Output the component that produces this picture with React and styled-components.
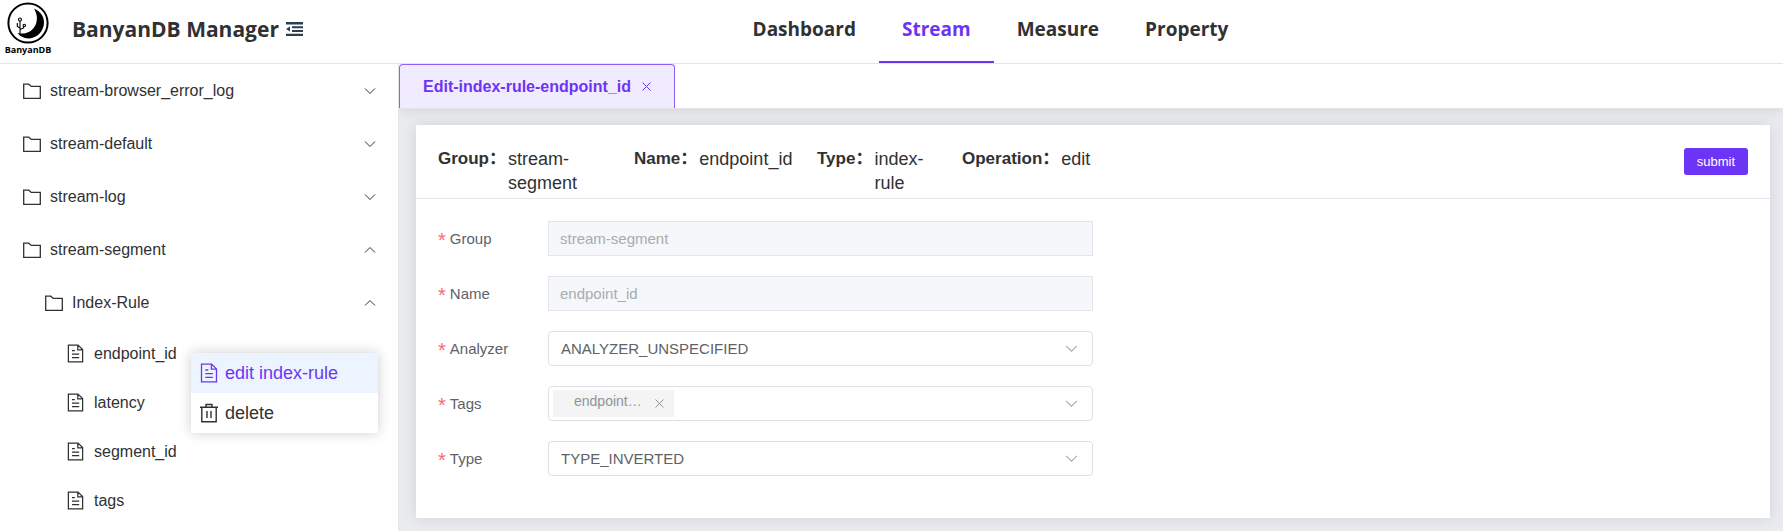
import React from "react";
import styled, { createGlobalStyle, css } from "styled-components";

const colors = {
  primary: "#6c35f5",
  primaryLight: "#f1ebff",
  text: "#303133",
  regular: "#606266",
  muted: "#a8abb2",
  border: "#dcdfe6",
  line: "#e4e5ea",
  page: "#e9ebef",
};

const GlobalStyle = createGlobalStyle`
  *, *::before, *::after { box-sizing: border-box; }
  body {
    margin: 0;
    color: ${colors.text};
    background: #fff;
    font-family: "Liberation Sans", "Noto Sans CJK SC", sans-serif;
    font-size: 16px;
  }
  button, input, select { font-family: inherit; margin: 0; }
  ul, dl, dd, h1 { margin: 0; padding: 0; list-style: none; }
`;

const Page = styled.div`
  display: flex;
  flex-direction: column;
  min-height: 100vh;
`;

const Header = styled.header`
  display: flex;
  align-items: stretch;
  height: 64px;
  padding-right: 106px;
  border-bottom: 1px solid ${colors.line};
  font-family: "Open Sans", sans-serif;
`;

const Brand = styled.div`
  display: flex;
  align-items: center;
  padding-left: 5px;
  padding-bottom: 6px;
`;

const Logo = styled.div`
  display: flex;
  flex-direction: column;
  align-items: center;
  width: 46px;
  margin-right: 21px;
  color: #000;
  font-size: 9px;
  line-height: 12px;
  font-weight: 700;
  white-space: nowrap;
`;

const Title = styled.h1`
  font-size: 21px;
  line-height: 28px;
  font-weight: 700;
  margin-right: 7px;
  white-space: nowrap;
`;

const IconButton = styled.button`
  display: inline-flex;
  align-items: center;
  justify-content: center;
  flex: none;
  padding: 0;
  border: 0;
  background: none;
  color: inherit;
  cursor: pointer;
`;

const Nav = styled.nav`
  flex: 1;
  display: flex;
  justify-content: center;
`;

const NavLink = styled.a`
  display: flex;
  align-items: center;
  padding: 0 23px 4px;
  border-bottom: 2px solid ${(p) => (p.$active ? colors.primary : "transparent")};
  color: ${(p) => (p.$active ? colors.primary : colors.text)};
  font-size: 19px;
  font-weight: 700;
  text-decoration: none;
`;

const Body = styled.div`
  flex: 1;
  display: flex;
`;

const Sidebar = styled.aside`
  position: relative;
  flex: none;
  width: 399px;
  border-right: 1px solid ${colors.line};
`;

const TreeRow = styled.button`
  display: flex;
  align-items: center;
  width: 100%;
  height: ${(p) => (p.$leaf ? 49 : 53)}px;
  padding: 0 22px 0 ${(p) => p.$indent}px;
  border: 0;
  background: none;
  color: ${colors.text};
  font-size: 16px;
  text-align: left;
  cursor: pointer;
`;

const TreeLabel = styled.span`
  flex: 1;
  margin-left: ${(p) => (p.$leaf ? 9 : 8)}px;
`;

const Menu = styled.ul`
  position: absolute;
  left: 191px;
  top: 289px;
  width: 187px;
  background: #fff;
  box-shadow: 0 0 12px rgba(0, 0, 0, 0.2);
`;

const MenuItem = styled.button`
  display: flex;
  align-items: center;
  gap: 6px;
  width: 100%;
  height: 40px;
  padding: 0 8px;
  border: 0;
  background: ${(p) => (p.$active ? "#ecf5ff" : "#fff")};
  color: ${(p) => (p.$active ? colors.primary : colors.text)};
  font-size: 18px;
  cursor: pointer;
`;

const Main = styled.main`
  flex: 1;
  min-width: 0;
  display: flex;
  flex-direction: column;
`;

const TabStrip = styled.div`
  position: relative;
  display: flex;
  height: 45px;
  background: #fff;
  border-bottom: 1px solid ${colors.line};
  box-shadow: 0 0 12px rgba(0, 0, 0, 0.12);
  clip-path: inset(0 0 -16px 0);
`;

const Tab = styled.div`
  display: flex;
  align-items: center;
  gap: 11px;
  padding: 0 23px;
  border: 1px solid #8c60f6;
  border-bottom: 0;
  border-radius: 4px 4px 0 0;
  background: ${colors.primaryLight};
  color: ${colors.primary};
  font-weight: 700;
`;

const Content = styled.div`
  flex: 1;
  display: flex;
  padding: 16px 13px 13px 17px;
  background: ${colors.page};
`;

const Card = styled.section`
  flex: 1;
  background: #fff;
  box-shadow: 0 0 14px rgba(0, 0, 0, 0.1);
`;

const CardHeader = styled.div`
  display: flex;
  justify-content: space-between;
  align-items: flex-start;
  padding: 22px 22px 3px;
  border-bottom: 1px solid ${colors.line};
`;

const Details = styled.dl`
  display: grid;
  grid-template-columns: 196px 183px 145px auto;
  font-size: 18px;
  line-height: 24px;
`;

const Detail = styled.div`
  display: flex;
  gap: 2px;

  dt {
    font-size: 17px;
    font-weight: 700;
    white-space: nowrap;
  }
  dd {
    max-width: ${(p) => (p.$narrow ? "72px" : "none")};
  }
`;

const SubmitButton = styled.button`
  height: 27px;
  margin-top: 1px;
  padding: 0 13px;
  border: 0;
  border-radius: 3px;
  background: ${colors.primary};
  color: #fff;
  font-size: 13px;
  cursor: pointer;
`;

const Form = styled.form`
  padding: 22px 22px 42px;
  display: flex;
  flex-direction: column;
  gap: 20px;
`;

const FormRow = styled.div`
  display: flex;
  width: 50%;
  height: 35px;
`;

const Label = styled.label`
  display: flex;
  gap: 4px;
  flex: none;
  width: 110px;
  color: ${colors.regular};
  font-size: 15px;
  line-height: 35px;

  &::before {
    content: "*";
    font-size: 20px;
    line-height: 38px;
    color: #f56c6c;
  }
`;

const field = css`
  width: 100%;
  height: 35px;
  border: 1px solid ${colors.border};
  color: ${colors.regular};
  font-size: 15px;
  background: #fff;
`;

const TextInput = styled.input`
  ${field}
  padding: 0 11px;
  border-color: ${colors.line};
  &:disabled {
    background: #f5f7fa;
    color: ${colors.muted};
  }
`;

const SelectWrap = styled.div`
  position: relative;
  flex: 1;
  color: ${colors.muted};

  > svg {
    position: absolute;
    right: 15px;
    top: 11px;
    pointer-events: none;
  }
`;

const Select = styled.select`
  ${field}
  appearance: none;
  padding: 0 32px 0 12px;
  border-radius: 4px;
`;

const TagBox = styled.div`
  ${field}
  display: flex;
  align-items: center;
  padding: 0 32px 0 4px;
  border-radius: 4px;

  input {
    flex: 1;
    min-width: 0;
    border: 0;
    outline: 0;
    background: none;
  }
`;

const Tag = styled.span`
  display: flex;
  justify-content: space-between;
  align-items: center;
  width: 121px;
  height: 27px;
  padding: 0 10px 0 21px;
  background: #f4f4f5;
  color: #909399;
  font-size: 14px;
  line-height: 20px;

  span {
    padding-bottom: 6px;
  }
`;

const Svg = ({ size, children, ...rest }) => (
  <svg width={size} height={size} viewBox="0 0 20 20" fill="none" stroke="currentColor" strokeWidth="1.3" aria-hidden="true" {...rest}>
    {children}
  </svg>
);

const FolderIcon = () => (
  <Svg size={20}>
    <path d="M1.7 3.2h5.1l2.4 2.2h9.1v11.9H1.7z" />
  </Svg>
);

const DocIcon = ({ size = 20 }) => (
  <Svg size={size}>
    <path d="M2.5 1.1h10.1l4.9 4.8v13H2.5z M12.4 1.3v4.8h4.9 M6.3 7h3 M6.3 10.7h7.6 M6.3 14.3h7.6" />
  </Svg>
);

const TrashIcon = () => (
  <Svg size={20} strokeWidth="1.4">
    <path d="M1 4.2h18 M2.8 4.2v14.6h14.4V4.2 M7 4V1.5h6V4 M8 8v7 M12 8v7" />
  </Svg>
);

const Chevron = ({ up, size = 12 }) => (
  <svg width={size} height={size} viewBox="0 0 12 12" fill="none" stroke="currentColor" aria-hidden="true">
    <path d={up ? "M1 8.500l5-5 5 5" : "M1 3.500l5 5 5-5"} />
  </svg>
);

const CloseIcon = ({ size = 9 }) => (
  <svg width={size} height={size} viewBox="0 0 9 9" fill="none" stroke="currentColor" aria-hidden="true">
    <path d="M.5.5l8 8M8.5.5l-8 8" />
  </svg>
);

const LogoMark = () => (
  <svg width="42" height="42" viewBox="0 0 42 42" aria-hidden="true">
    <circle cx="21" cy="21" r="19.6" fill="#fff" stroke="#000" strokeWidth="2" />
    <path d="M27 6.5C35 10 38.5 17 36.5 24.5C34 33 26 38 18 36C14.5 35 12 33 10.5 31C18 33 25 30 28.5 23C31 17.5 30 11.5 27 6.5Z" fill="#000" />
    <g fill="none" stroke="#000" strokeWidth="1.1">
      <circle cx="13" cy="17.5" r="1.5" />
      <circle cx="17.3" cy="23.5" r="1.2" />
      <path d="M13 19v13 M10.3 21v3.5l2.7 1.5 M13 27.5l3.5-1.5v-1.5" />
    </g>
  </svg>
);

const CollapseIcon = () => (
  <svg width="18" height="16" viewBox="0 0 18 16" fill="#2c3e50" aria-hidden="true">
    <path d="M0 1h17v2.500H0zM6 5.200h11v2H6zM6 9h11v2H6zM0 12.700h17v2.300H0zM0 8l4-2.500v5z" />
  </svg>
);

const groups = [
  { name: "stream-browser_error_log" },
  { name: "stream-default" },
  { name: "stream-log" },
  { name: "stream-segment", open: true },
  { name: "Index-Rule", open: true, nested: true },
];

const rules = ["endpoint_id", "latency", "segment_id", "tags"];

const details = [
  { label: "Group", value: "stream-segment", narrow: true },
  { label: "Name", value: "endpoint_id" },
  { label: "Type", value: "index-rule", narrow: true },
  { label: "Operation", value: "edit" },
];

export default function App() {
  return (
    <Page>
      <GlobalStyle />
      <Header>
        <Brand>
          <Logo>
            <LogoMark />
            BanyanDB
          </Logo>
          <Title>BanyanDB Manager</Title>
          <IconButton aria-label="Collapse sidebar">
            <CollapseIcon />
          </IconButton>
        </Brand>
        <Nav>
          {["Dashboard", "Stream", "Measure", "Property"].map((name) => (
            <NavLink key={name} href={`#${name.toLowerCase()}`} $active={name === "Stream"}>
              {name}
            </NavLink>
          ))}
        </Nav>
      </Header>
      <Body>
        <Sidebar>
          {groups.map((g) => (
            <TreeRow key={g.name} $indent={g.nested ? 44 : 22} aria-expanded={!!g.open}>
              <FolderIcon />
              <TreeLabel>{g.name}</TreeLabel>
              <Chevron up={g.open} />
            </TreeRow>
          ))}
          {rules.map((name) => (
            <TreeRow key={name} $leaf $indent={66}>
              <DocIcon size={19} />
              <TreeLabel $leaf>{name}</TreeLabel>
            </TreeRow>
          ))}
          <Menu>
            <li>
              <MenuItem $active>
                <DocIcon />
                edit index-rule
              </MenuItem>
            </li>
            <li>
              <MenuItem>
                <TrashIcon />
                delete
              </MenuItem>
            </li>
          </Menu>
        </Sidebar>
        <Main>
          <TabStrip>
            <Tab>
              <span>Edit-index-rule-endpoint_id</span>
              <IconButton aria-label="Close tab">
                <CloseIcon />
              </IconButton>
            </Tab>
          </TabStrip>
          <Content>
            <Card>
              <CardHeader>
                <Details>
                  {details.map((d) => (
                    <Detail key={d.label} $narrow={d.narrow}>
                      <dt>{d.label}：</dt>
                      <dd>{d.value}</dd>
                    </Detail>
                  ))}
                </Details>
                <SubmitButton type="submit" form="rule-form">submit</SubmitButton>
              </CardHeader>
              <Form id="rule-form" onSubmit={(e) => e.preventDefault()}>
                <FormRow>
                  <Label htmlFor="group">Group</Label>
                  <TextInput id="group" defaultValue="stream-segment" disabled />
                </FormRow>
                <FormRow>
                  <Label htmlFor="name">Name</Label>
                  <TextInput id="name" defaultValue="endpoint_id" disabled />
                </FormRow>
                <FormRow>
                  <Label htmlFor="analyzer">Analyzer</Label>
                  <SelectWrap>
                    <Select id="analyzer">
                      <option>ANALYZER_UNSPECIFIED</option>
                    </Select>
                    <Chevron size={13} />
                  </SelectWrap>
                </FormRow>
                <FormRow>
                  <Label htmlFor="tags">Tags</Label>
                  <SelectWrap>
                    <TagBox>
                      <Tag>
                        <span>endpoint…</span>
                        <IconButton type="button" aria-label="Remove tag">
                          <CloseIcon />
                        </IconButton>
                      </Tag>
                      <input id="tags" />
                    </TagBox>
                    <Chevron size={13} />
                  </SelectWrap>
                </FormRow>
                <FormRow>
                  <Label htmlFor="type">Type</Label>
                  <SelectWrap>
                    <Select id="type">
                      <option>TYPE_INVERTED</option>
                    </Select>
                    <Chevron size={13} />
                  </SelectWrap>
                </FormRow>
              </Form>
            </Card>
          </Content>
        </Main>
      </Body>
    </Page>
  );
}
